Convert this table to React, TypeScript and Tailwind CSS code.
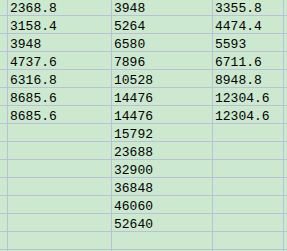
const colB = ['2368.8', '3158.4', '3948', '4737.6', '6316.8', '8685.6', '8685.6'];
const colC = [
  '3948', '5264', '6580', '7896', '10528', '14476', '14476',
  '15792', '23688', '32900', '36848', '46060', '52640',
];
const colD = ['3355.8', '4474.4', '5593', '6711.6', '8948.8', '12304.6', '12304.6'];

const ROWS = 15;

function Cell({ value, className }: { value?: string; className: string }) {
  return (
    <div className={`h-full shrink-0 border-r border-[#b9c0d8] pl-[2px] pt-[4px] leading-[14px] whitespace-nowrap overflow-hidden ${className}`}>
      {value ?? ''}
    </div>
  );
}

export default function App() {
  return (
    <div
      className="w-[287px] h-[251px] overflow-hidden bg-[#cce8cf] text-[13px] text-black"
      style={{ fontFamily: '"Liberation Mono", "DejaVu Sans Mono", monospace' }}
    >
      <div className="mt-[-2px] flex flex-col">
        {[...Array(ROWS)].map((_, i) => (
          <div key={i} className="flex h-[18px] shrink-0 border-b border-[#b9c0d8]">
            <Cell className="w-[8px]" />
            <Cell value={colB[i]} className="w-[104px]" />
            <Cell value={colC[i]} className="w-[101px]" />
            <Cell value={colD[i]} className="w-[71px]" />
            <div className="flex-1" />
          </div>
        ))}
      </div>
    </div>
  );
}
